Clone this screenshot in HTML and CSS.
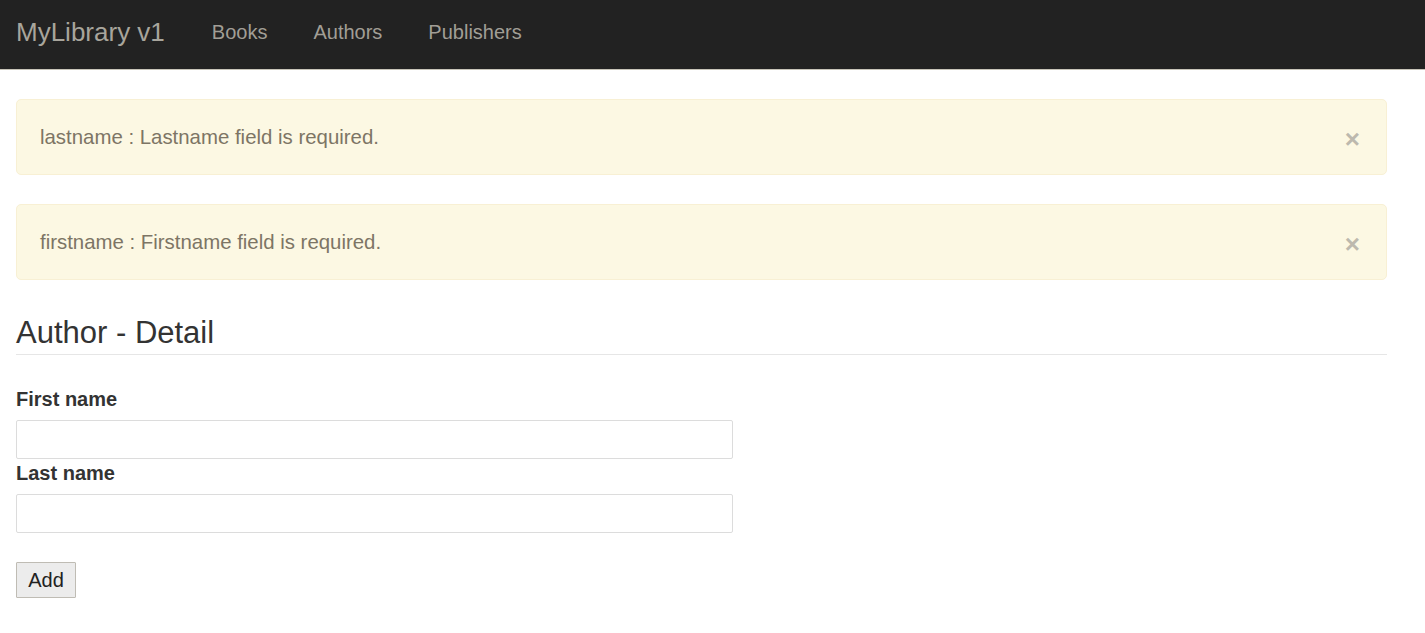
FILE: index.html
```html
<!DOCTYPE html>
<html>
<head>
<meta charset="utf-8">
<link rel="stylesheet" href="styles.css">
</head>
<body>
<nav class="navbar">
  <a class="brand">MyLibrary v1</a>
  <ul class="nav">
    <li><a>Books</a></li>
    <li><a>Authors</a></li>
    <li><a>Publishers</a></li>
  </ul>
</nav>
<main class="container">
  <div class="alert"><span>lastname : Lastname field is required.</span><span class="close">&#215;</span></div>
  <div class="alert"><span>firstname : Firstname field is required.</span><span class="close">&#215;</span></div>
  <h2 class="page-header">Author - Detail</h2>
  <form class="form">
    <label class="label">First name</label>
    <input class="input" type="text">
    <label class="label">Last name</label>
    <input class="input" type="text">
    <button class="btn" type="button">Add</button>
  </form>
</main>
</body>
</html>
```
FILE: styles.css
```css
* { box-sizing: border-box; }
body {
  margin: 0;
  font-family: "Liberation Sans", Arial, sans-serif;
  color: #333;
  background: #fff;
}
.navbar {
  height: 70px;
  background: #222;
  display: flex;
  align-items: center;
  padding: 0 16px;
  border-bottom: 1px solid #c8c4b8;
}
.brand {
  font-size: 26px;
  color: #a8a59c;
  margin-right: 24px;
  position: relative;
  top: -2px;
}
.nav {
  list-style: none;
  margin: 0;
  padding: 0;
  display: flex;
}
.nav a {
  display: block;
  font-size: 20px;
  color: #a19e96;
  padding: 0 23px;
  position: relative;
  top: -2px;
}
.container {
  width: 1387px;
  padding: 0 0 0 16px;
}
.alert {
  display: flex;
  align-items: center;
  justify-content: space-between;
  height: 76px;
  margin-top: 29px;
  padding: 0 26px 0 23px;
  background: #fcf8e3;
  border: 1px solid #f8f0d4;
  border-radius: 5px;
  color: #7d7565;
  font-size: 20.4px;
}
.alert span:first-child { position: relative; top: 0; }
.close {
  font-size: 26px;
  font-weight: bold;
  color: #bdb9ae;
  line-height: 1;
  position: relative;
  top: 2px;
}
.page-header {
  margin: 36px 0 0;
  padding-bottom: 4px;
  font-size: 31px;
  font-weight: normal;
  color: #333;
  border-bottom: 1px solid #e6e6e6;
  line-height: 34px;
}
.form {
  display: flex;
  flex-direction: column;
  align-items: flex-start;
  padding-top: 33px;
}
.label {
  font-size: 20px;
  font-weight: bold;
  color: #333;
  line-height: 22px;
  margin-bottom: 10px;
}
.input {
  width: 717px;
  height: 39px;
  border: 1px solid #dcdcdc;
  border-radius: 2px;
  margin: 0 0 3px;
  font-size: 18px;
}
.btn {
  margin-top: 26px;
  height: 36px;
  width: 60px;
  padding: 0;
  font-family: "Liberation Sans", Arial, sans-serif;
  font-size: 20px;
  color: #222;
  background: #ececec;
  border: 1px solid #bfbcb4;
  border-radius: 1px;
}
```
